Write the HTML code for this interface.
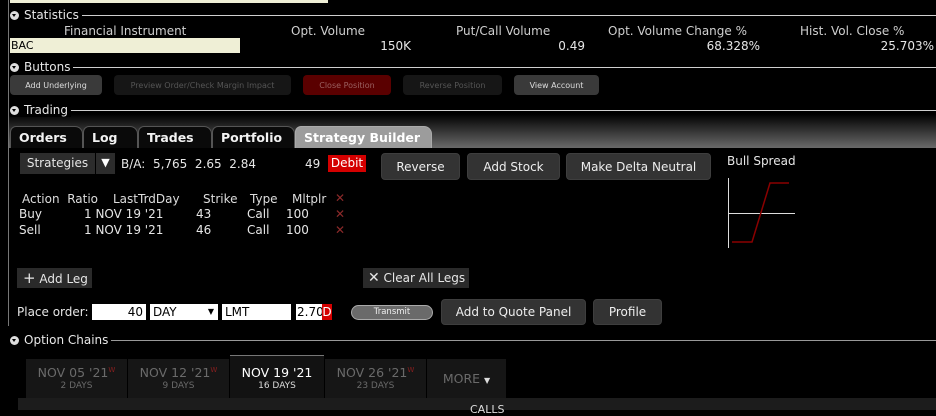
<!DOCTYPE html>
<html><head><style>
*{margin:0;padding:0;box-sizing:border-box}
body{width:936px;height:410px;background:#000;overflow:hidden;position:relative;font-family:"DejaVu Sans","Liberation Sans",sans-serif;color:#e6e6e6;font-size:12px}
.a{position:absolute;white-space:nowrap}
.hdr{position:absolute;left:10px;font-size:12px;color:#e8e8e8;display:flex;align-items:center;background:#000;padding-right:3px;z-index:2;height:14px}
.tri{width:9px;height:9px;border-radius:50%;background:#ddd;position:relative;margin-right:5px}
.tri:after{content:"";position:absolute;left:2px;top:3px;border-left:2.5px solid transparent;border-right:2.5px solid transparent;border-top:3.5px solid #000}
.ln{position:absolute;height:1px;background:#cfcfcf;right:0;left:10px}
.sb{position:absolute;top:75px;height:20px;border-radius:4px;font-size:8px;display:flex;align-items:center;justify-content:center}
.tab{position:absolute;top:126px;height:22px;background:#0a0a0a;border:1px solid #555;border-bottom:none;border-radius:6px 8px 0 0;font-weight:bold;font-size:12.5px;color:#f2f2f2;padding:3px 0 0 8px}
.btn{position:absolute;background:#333;border:1px solid #3e3e3e;border-radius:4px;display:flex;align-items:center;justify-content:center;font-size:12px;color:#eee}
.inp{position:absolute;top:304px;height:16px;background:#fff;color:#000;font-size:12px;line-height:16px;padding:0 3px}
.dt{position:absolute;top:359px;height:39px;background:#161616;text-align:center;color:#6a6a6a;font-size:12.5px;padding-top:6px}
.dt small{display:block;font-size:9px;margin-top:1px}
.dt sup{color:#8a1f1f;font-size:7px}
.x{color:#8c2a2a;font-weight:bold}
</style></head><body>
<div class="a" style="left:8px;top:0;width:1px;height:326px;background:#777"></div>
<div class="a" style="left:10px;top:0;width:318px;height:3px;background:#efefd6"></div>

<div class="ln" style="top:15px"></div>
<div class="hdr" style="top:8px"><span class="tri"></span>Statistics</div>
<div class="a" style="left:64px;top:24px;color:#cfcfcf">Financial Instrument</div>
<div class="a" style="left:291px;top:24px;color:#cfcfcf">Opt. Volume</div>
<div class="a" style="left:456px;top:24px;color:#cfcfcf">Put/Call Volume</div>
<div class="a" style="left:608px;top:24px;color:#cfcfcf">Opt. Volume Change %</div>
<div class="a" style="left:800px;top:24px;color:#cfcfcf">Hist. Vol. Close %</div>
<div class="a" style="left:10px;top:38px;width:230px;height:15px;background:#efefd6;color:#000;font-size:11px;line-height:15px;padding-left:1px">BAC</div>
<div class="a" style="right:525px;top:39px">150K</div>
<div class="a" style="right:351px;top:39px">0.49</div>
<div class="a" style="right:176px;top:39px">68.328%</div>
<div class="a" style="right:2px;top:39px">25.703%</div>

<div class="ln" style="top:67px"></div>
<div class="hdr" style="top:60px"><span class="tri"></span>Buttons</div>
<div class="sb" style="left:10px;width:92px;background:#3a3a3a;color:#ddd">Add Underlying</div>
<div class="sb" style="left:114px;width:177px;background:#161616;color:#555">Preview Order/Check Margin Impact</div>
<div class="sb" style="left:303px;width:88px;background:#5a0000;color:#9a6060">Close Position</div>
<div class="sb" style="left:403px;width:99px;background:#161616;color:#555">Reverse Position</div>
<div class="sb" style="left:514px;width:85px;background:#3a3a3a;color:#ddd">View Account</div>

<div class="ln" style="top:110px"></div>
<div class="hdr" style="top:103px"><span class="tri"></span>Trading</div>
<div class="a" style="left:9px;right:0;top:114px;height:34px;background:linear-gradient(#000,#6a6a6a)"></div>
<div class="tab" style="left:10px;width:73px">Orders</div>
<div class="tab" style="left:83px;width:55px">Log</div>
<div class="tab" style="left:138px;width:74px">Trades</div>
<div class="tab" style="left:212px;width:83px">Portfolio</div>
<div class="tab" style="left:295px;width:137px;background:#9c9c9c;border-color:#aaa;color:#fff">Strategy Builder</div>

<div class="a" style="left:20px;top:153px;width:75px;height:21px;background:#2c2c2c;text-align:center;line-height:21px">Strategies</div>
<div class="a" style="left:96px;top:153px;width:19px;height:21px;background:#2c2c2c;text-align:center;line-height:20px;font-size:11px;color:#fff">▼</div>
<div class="a" style="left:121px;top:157px">B/A:&nbsp;&nbsp;5,765&nbsp;&nbsp;2.65&nbsp;&nbsp;2.84</div>
<div class="a" style="left:305px;top:157px">49</div>
<div class="a" style="left:328px;top:155px;width:38px;height:17px;background:#d40000;color:#fff;text-align:center;line-height:17px">Debit</div>
<div class="btn" style="left:381px;top:153px;width:79px;height:27px">Reverse</div>
<div class="btn" style="left:467px;top:153px;width:93px;height:27px">Add Stock</div>
<div class="btn" style="left:566px;top:153px;width:145px;height:27px">Make Delta Neutral</div>
<div class="a" style="left:727px;top:154px">Bull Spread</div>
<svg class="a" style="left:720px;top:175px" width="90" height="80"><line x1="8.5" y1="3" x2="8.5" y2="73" stroke="#ddd"/><line x1="8" y1="38.5" x2="75" y2="38.5" stroke="#ddd"/><polyline points="12,67 32,67 50,8 69,8" fill="none" stroke="#8a0000" stroke-width="1.5"/></svg>

<div class="a" style="left:22px;top:192px;color:#ddd">Action&nbsp; Ratio</div>
<div class="a" style="left:113px;top:192px;color:#ddd">LastTrdDay</div>
<div class="a" style="left:203px;top:192px;color:#ddd">Strike</div>
<div class="a" style="left:250px;top:192px;color:#ddd">Type</div>
<div class="a" style="left:292px;top:192px;color:#ddd">Mltplr</div>
<div class="a x" style="left:335px;top:191px">✕</div>
<div class="a" style="left:19px;top:207px">Buy</div><div class="a" style="left:84px;top:207px">1&nbsp;NOV 19 '21</div><div class="a" style="left:196px;top:207px">43</div><div class="a" style="left:247px;top:207px">Call</div><div class="a" style="left:286px;top:207px">100</div><div class="a x" style="left:335px;top:207px">✕</div>
<div class="a" style="left:19px;top:223px">Sell</div><div class="a" style="left:84px;top:223px">1&nbsp;NOV 19 '21</div><div class="a" style="left:196px;top:223px">46</div><div class="a" style="left:247px;top:223px">Call</div><div class="a" style="left:286px;top:223px">100</div><div class="a x" style="left:335px;top:223px">✕</div>

<div class="a" style="left:17px;top:268px;width:75px;height:20px;background:#2a2a2a;line-height:20px;padding-left:6px"><span style="font-size:15px">+</span> Add Leg</div>
<div class="a" style="left:363px;top:268px;width:106px;height:20px;background:#2a2a2a;line-height:20px;padding-left:5px"><span style="font-size:14px">✕</span> Clear All Legs</div>

<div class="a" style="left:17px;top:305px">Place order:</div>
<div class="inp" style="left:92px;width:54px;text-align:right">40</div>
<div class="inp" style="left:150px;width:68px">DAY<span style="position:absolute;right:4px;font-size:8px">▼</span></div>
<div class="inp" style="left:222px;width:69px">LMT</div>
<div class="inp" style="left:296px;width:26px;padding:0 1px;text-align:right">2.70</div>
<div class="a" style="left:322px;top:304px;width:10px;height:16px;background:#d40000;color:#fff;text-align:center;line-height:16px">D</div>
<div class="a" style="left:351px;top:305px;width:82px;height:15px;border-radius:8px;background:#6a6a6a;border:1px solid #aaa;color:#eee;font-size:8.5px;text-align:center;line-height:13px">Transmit</div>
<div class="btn" style="left:441px;top:299px;width:145px;height:26px">Add to Quote Panel</div>
<div class="btn" style="left:593px;top:299px;width:69px;height:26px">Profile</div>

<div class="ln" style="top:340px;background:#999"></div>
<div class="hdr" style="top:333px"><span class="tri"></span>Option Chains</div>

<div class="dt" style="left:26px;width:101px">NOV 05 '21<sup>W</sup><small>2 DAYS</small></div>
<div class="dt" style="left:128px;width:101px">NOV 12 '21<sup>W</sup><small>9 DAYS</small></div>
<div class="dt" style="left:230px;width:94px;top:355px;height:43px;background:#121212;border-top:1px solid #777;color:#fff;padding-top:9px">NOV 19 '21<small style="color:#ddd">16 DAYS</small></div>
<div class="dt" style="left:325px;width:101px">NOV 26 '21<sup>W</sup><small>23 DAYS</small></div>
<div class="dt" style="left:427px;width:79px;padding-top:12px">MORE <span style="font-size:8px;color:#ddd">▼</span></div>
<div class="a" style="left:18px;right:0;top:398px;height:12px;background:#1c1c1c"></div>
<div class="a" style="left:470px;top:403px;font-size:11px;color:#ddd">CALLS</div>
</body></html>
